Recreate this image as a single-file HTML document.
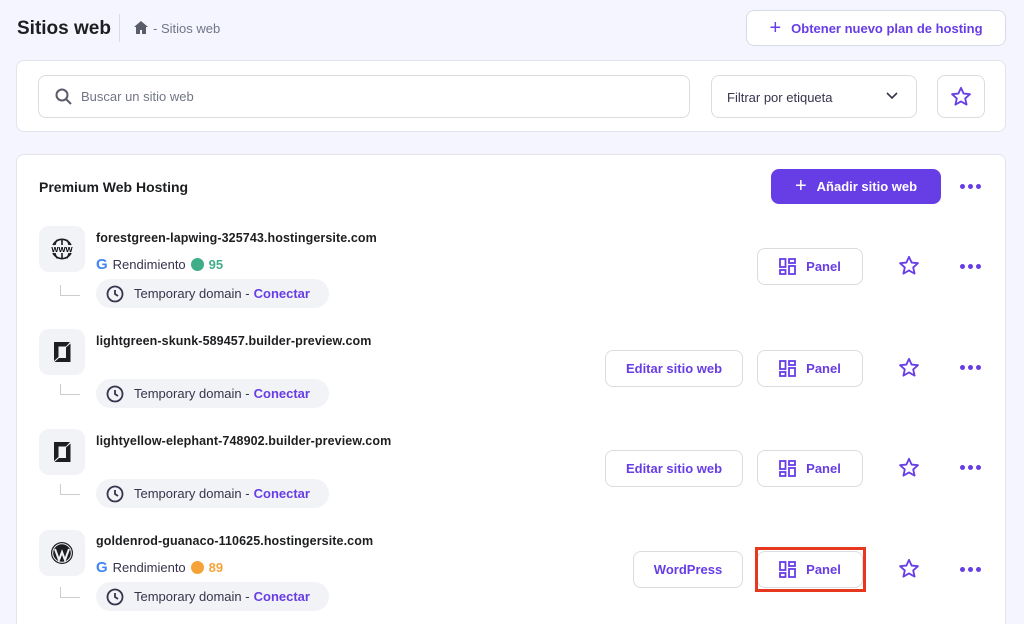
<!DOCTYPE html><html><head><meta charset="utf-8"><style>
*{box-sizing:border-box;margin:0;padding:0}
html{overflow:hidden;height:624px}
body{width:1024px;height:624px;overflow:hidden;background:#f4f5ff;font-family:"Liberation Sans",sans-serif;color:#1d1e20;position:relative}
.a{position:absolute}
.card{position:absolute;background:#fff;border:1px solid #e3e4ec;border-radius:8px}
.btn{position:absolute;background:#fff;border:1px solid #dadce0;border-radius:8px;color:#673de6;font-weight:bold;font-size:13px;display:flex;align-items:center;justify-content:center;gap:10px}
.ib{position:absolute;left:39px;width:46px;height:46px;border-radius:10px;background:#f2f3f6;display:flex;align-items:center;justify-content:center}
.dom{position:absolute;left:96px;font-size:12.5px;font-weight:bold;letter-spacing:.1px}
.pill{position:absolute;left:96px;width:233px;height:29px;border-radius:15px;background:#f2f3f6;font-size:13px;color:#36344d;display:flex;align-items:center;padding-left:10px;gap:10px}
.pill b{color:#673de6}
.conn{position:absolute;left:60px;width:20px;height:11px;border-left:1px solid #ccc;border-bottom:1px solid #ccc}
.rend{position:absolute;left:96px;font-size:13px;color:#36344d;display:flex;align-items:center;gap:5px}
.dot{width:13px;height:13px;border-radius:50%}
.dots{position:absolute;left:960px;font-size:0;display:flex;gap:3px}
.dots i{width:5px;height:5px;border-radius:50%;background:#673de6;display:block}
</style></head><body>
<div class="a" style="left:17px;top:18px;font-size:19px;font-weight:bold">Sitios web</div>
<div class="a" style="left:119px;top:14px;width:1px;height:28px;background:#dadce0"></div>
<svg class="a" style="left:134px;top:21px" width="14" height="13" viewBox="0 0 14 13"><path d="M7 0L0 6h2v7h4V9h2v4h4V6h2z" fill="#5a5c6a"/></svg>
<div class="a" style="left:153px;top:21px;font-size:13px;color:#727586">- Sitios web</div>
<div class="btn" style="left:746px;top:10px;width:260px;height:36px;border-color:#d8dae6"><span style="font-size:20px;font-weight:normal">+</span>Obtener nuevo plan de hosting</div>
<div class="card" style="left:16px;top:60px;width:990px;height:72px"></div>
<div class="a" style="left:38px;top:75px;width:652px;height:43px;border:1px solid #dadce0;border-radius:8px"></div>
<svg class="a" style="left:55px;top:88px" width="18" height="18" viewBox="0 0 18 18"><circle cx="7" cy="7" r="5.5" fill="none" stroke="#5a5c6a" stroke-width="2"/><path d="M11 11l5 5" stroke="#5a5c6a" stroke-width="2"/></svg>
<div class="a" style="left:81px;top:89px;font-size:13px;color:#727586">Buscar un sitio web</div>
<div class="a" style="left:711px;top:75px;width:206px;height:43px;border:1px solid #dadce0;border-radius:8px;font-size:13px;color:#36344d;padding:14px 0 0 15px">Filtrar por etiqueta</div>
<svg class="a" style="left:886px;top:92px" width="12" height="8" viewBox="0 0 12 8"><path d="M1 1l5 5 5-5" fill="none" stroke="#36344d" stroke-width="1.6"/></svg>
<div class="a" style="left:937px;top:75px;width:48px;height:43px;border:1px solid #dadce0;border-radius:8px"></div>
<svg class="a" style="left:950px;top:86px" width="22" height="21" viewBox="0 0 24 23"><path d="M12 2l2.9 6.3 6.9.7-5.2 4.6 1.5 6.8L12 16.9 5.9 20.4l1.5-6.8L2.2 9l6.9-.7z" fill="none" stroke="#673de6" stroke-width="2" stroke-linejoin="round"/></svg>
<div class="card" style="left:16px;top:154px;width:990px;height:480px"></div>
<div class="a" style="left:39px;top:179px;font-size:14px;font-weight:bold">Premium Web Hosting</div>
<div class="btn" style="left:771px;top:169px;width:170px;height:35px;background:#673de6;border-color:#673de6;color:#fff"><span style="font-size:20px;font-weight:normal">+</span>Añadir sitio web</div>
<div class="dots" style="top:184px"><i></i><i></i><i></i></div>

<div class="ib" style="top:226px"><svg width="26" height="26" viewBox="0 0 26 26"><path d="M4 9a10 10 0 0118 0M4 17a10 10 0 0018 0M13 3v6M13 17v6M8 4c-2 3-2 4-2 5M18 4c2 3 2 4 2 5M8 22c-2-3-2-4-2-5M18 22c2-3 2-4 2-5" fill="none" stroke="#1d1e20" stroke-width="1.6"/><text x="13" y="16" font-size="7.5" font-weight="bold" text-anchor="middle" font-family="Liberation Sans">WWW</text></svg></div>
<div class="ib" style="top:329px"><svg width="26" height="26" viewBox="0 0 26 26"><path d="M5 3H21L17 7.5H9.5V18L5 22Z" fill="#1d1e20"/><path d="M21.5 4.5V23H5.5L10 19H17V8.5Z" fill="#1d1e20"/></svg></div>
<div class="ib" style="top:429px"><svg width="26" height="26" viewBox="0 0 26 26"><path d="M5 3H21L17 7.5H9.5V18L5 22Z" fill="#1d1e20"/><path d="M21.5 4.5V23H5.5L10 19H17V8.5Z" fill="#1d1e20"/></svg></div>
<div class="ib" style="top:530px"><svg width="24" height="24" viewBox="0 0 24 24"><circle cx="12" cy="12" r="11" fill="#1d1e20"/><circle cx="12" cy="12" r="9.3" fill="none" stroke="#f2f3f6" stroke-width="1"/><path d="M5 8l4 11 3-8 3 8 4-11" fill="none" stroke="#f2f3f6" stroke-width="2"/></svg></div>

<div class="dom" style="top:231px">forestgreen-lapwing-325743.hostingersite.com</div>
<div class="dom" style="top:334px">lightgreen-skunk-589457.builder-preview.com</div>
<div class="dom" style="top:434px">lightyellow-elephant-748902.builder-preview.com</div>
<div class="dom" style="top:534px">goldenrod-guanaco-110625.hostingersite.com</div>

<div class="rend" style="top:256px"><b style="color:#4285f4;font-size:15px">G</b> Rendimiento <span class="dot" style="background:#3fae88"></span><b style="color:#3fae88">95</b></div>
<div class="rend" style="top:559px"><b style="color:#4285f4;font-size:15px">G</b> Rendimiento <span class="dot" style="background:#f5a339"></span><b style="color:#f5a339">89</b></div>

<div class="conn" style="top:285px"></div><div class="conn" style="top:384px"></div><div class="conn" style="top:484px"></div><div class="conn" style="top:587px"></div>
<div class="pill" style="top:279px"><svg width="18" height="18" viewBox="0 0 18 18"><circle cx="9" cy="9" r="7.5" fill="none" stroke="#36344d" stroke-width="1.8"/><path d="M9 5v4l3 2" fill="none" stroke="#36344d" stroke-width="1.8"/></svg>Temporary domain - <b style="margin-left:-6px">Conectar</b></div>
<div class="pill" style="top:379px"><svg width="18" height="18" viewBox="0 0 18 18"><circle cx="9" cy="9" r="7.5" fill="none" stroke="#36344d" stroke-width="1.8"/><path d="M9 5v4l3 2" fill="none" stroke="#36344d" stroke-width="1.8"/></svg>Temporary domain - <b style="margin-left:-6px">Conectar</b></div>
<div class="pill" style="top:479px"><svg width="18" height="18" viewBox="0 0 18 18"><circle cx="9" cy="9" r="7.5" fill="none" stroke="#36344d" stroke-width="1.8"/><path d="M9 5v4l3 2" fill="none" stroke="#36344d" stroke-width="1.8"/></svg>Temporary domain - <b style="margin-left:-6px">Conectar</b></div>
<div class="pill" style="top:582px"><svg width="18" height="18" viewBox="0 0 18 18"><circle cx="9" cy="9" r="7.5" fill="none" stroke="#36344d" stroke-width="1.8"/><path d="M9 5v4l3 2" fill="none" stroke="#36344d" stroke-width="1.8"/></svg>Temporary domain - <b style="margin-left:-6px">Conectar</b></div>

<div class="btn" style="left:605px;top:350px;width:138px;height:37px">Editar sitio web</div>
<div class="btn" style="left:605px;top:450px;width:138px;height:37px">Editar sitio web</div>
<div class="btn" style="left:633px;top:551px;width:110px;height:37px">WordPress</div>

<div class="btn" style="left:757px;top:248px;width:106px;height:37px"><svg width="17" height="17" viewBox="0 0 17 17" fill="none" stroke="#673de6" stroke-width="1.8"><rect x="1" y="1" width="5.5" height="8"/><rect x="10" y="1" width="6" height="4"/><rect x="1" y="12" width="5.5" height="4"/><rect x="10" y="8" width="6" height="8"/></svg>Panel</div>
<div class="btn" style="left:757px;top:350px;width:106px;height:37px"><svg width="17" height="17" viewBox="0 0 17 17" fill="none" stroke="#673de6" stroke-width="1.8"><rect x="1" y="1" width="5.5" height="8"/><rect x="10" y="1" width="6" height="4"/><rect x="1" y="12" width="5.5" height="4"/><rect x="10" y="8" width="6" height="8"/></svg>Panel</div>
<div class="btn" style="left:757px;top:450px;width:106px;height:37px"><svg width="17" height="17" viewBox="0 0 17 17" fill="none" stroke="#673de6" stroke-width="1.8"><rect x="1" y="1" width="5.5" height="8"/><rect x="10" y="1" width="6" height="4"/><rect x="1" y="12" width="5.5" height="4"/><rect x="10" y="8" width="6" height="8"/></svg>Panel</div>
<div class="btn" style="left:757px;top:551px;width:106px;height:37px"><svg width="17" height="17" viewBox="0 0 17 17" fill="none" stroke="#673de6" stroke-width="1.8"><rect x="1" y="1" width="5.5" height="8"/><rect x="10" y="1" width="6" height="4"/><rect x="1" y="12" width="5.5" height="4"/><rect x="10" y="8" width="6" height="8"/></svg>Panel</div>
<div class="a" style="left:755px;top:547px;width:111px;height:45px;border:3px solid #e5381f"></div>

<svg class="a" style="left:898px;top:255px" width="22" height="21" viewBox="0 0 24 23"><path d="M12 2l2.9 6.3 6.9.7-5.2 4.6 1.5 6.8L12 16.9 5.9 20.4l1.5-6.8L2.2 9l6.9-.7z" fill="none" stroke="#673de6" stroke-width="2" stroke-linejoin="round"/></svg>
<svg class="a" style="left:898px;top:357px" width="22" height="21" viewBox="0 0 24 23"><path d="M12 2l2.9 6.3 6.9.7-5.2 4.6 1.5 6.8L12 16.9 5.9 20.4l1.5-6.8L2.2 9l6.9-.7z" fill="none" stroke="#673de6" stroke-width="2" stroke-linejoin="round"/></svg>
<svg class="a" style="left:898px;top:457px" width="22" height="21" viewBox="0 0 24 23"><path d="M12 2l2.9 6.3 6.9.7-5.2 4.6 1.5 6.8L12 16.9 5.9 20.4l1.5-6.8L2.2 9l6.9-.7z" fill="none" stroke="#673de6" stroke-width="2" stroke-linejoin="round"/></svg>
<svg class="a" style="left:898px;top:558px" width="22" height="21" viewBox="0 0 24 23"><path d="M12 2l2.9 6.3 6.9.7-5.2 4.6 1.5 6.8L12 16.9 5.9 20.4l1.5-6.8L2.2 9l6.9-.7z" fill="none" stroke="#673de6" stroke-width="2" stroke-linejoin="round"/></svg>
<div class="dots" style="top:264px"><i></i><i></i><i></i></div>
<div class="dots" style="top:365px"><i></i><i></i><i></i></div>
<div class="dots" style="top:465px"><i></i><i></i><i></i></div>
<div class="dots" style="top:567px"><i></i><i></i><i></i></div>
</body></html>
